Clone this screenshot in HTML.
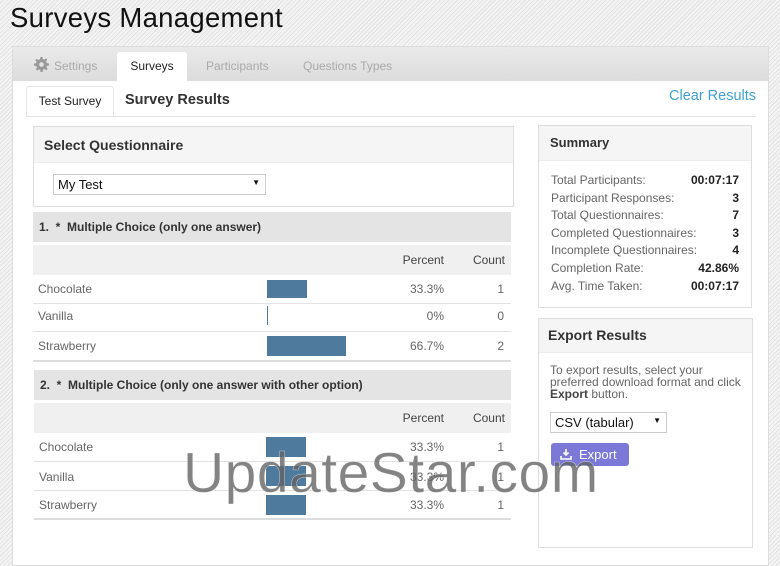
<!DOCTYPE html>
<html><head><meta charset="utf-8"><style>
*{margin:0;padding:0;box-sizing:border-box}
body{width:780px;height:536px;overflow:hidden;position:relative;font-family:"Liberation Sans",Arial,sans-serif;
background:repeating-linear-gradient(135deg,#f4f4f4 0 2px,#e2e2e2 2px 3px);}
.a{position:absolute}
h1{position:absolute;left:10px;top:2px;font-weight:normal;font-size:27.5px;color:#111;letter-spacing:0.3px}
.panel{left:12px;top:46px;width:757px;height:520px;background:#fff;border:1px solid #ddd}
.tabbar{left:13px;top:47px;width:755px;height:34px;background:linear-gradient(#eaeaea,#dcdcdc)}
.tab{font-size:12px;color:#aaa}
.box{border:1px solid #ddd;background:#fff}
.bh{background:#f5f5f5;border-bottom:1px solid #eee;font-weight:bold;color:#333}
.qh{background:#e4e4e4;font-weight:bold;font-size:12px;color:#333;padding-left:6px}
.th{background:#f0f0f0;font-size:12px;color:#444}
.row{background:#fff;border-bottom:1px solid #e2e2e2;font-size:12px;color:#666}
.bar{background:#4e7a9e}
.s{font-size:12px;color:#666;line-height:17.6px}
.s b{float:right;color:#222}
</style></head><body>
<h1>Surveys Management</h1>
<div class="a panel"></div>
<div class="a tabbar"></div>
<svg class="a" style="left:34px;top:57px" width="15" height="15" viewBox="0 0 16 16"><path fill="#999" d="M7 0h2l.4 2.2 1.5.6 1.800-1.3 1.4 1.4-1.3 1.8.6 1.5L16 7v2l-2.2.4-.6 1.5 1.3 1.8-1.4 1.4-1.8-1.3-1.5.6L9 16H7l-.4-2.2-1.5-.6-1.8 1.3-1.4-1.4 1.3-1.8-.6-1.5L0 9V7l2.2-.4.6-1.5-1.3-1.8 1.4-1.4 1.8 1.3 1.5-.6z"/><circle cx="8" cy="8" r="2.5" fill="#e2e2e2"/></svg>
<div class="a tab" style="left:54px;top:59px">Settings</div>
<div class="a" style="left:117px;top:52px;width:70px;height:30px;background:#fff;border-radius:3px 3px 0 0;font-size:12px;color:#222;text-align:center;line-height:28px">Surveys</div>
<div class="a tab" style="left:206px;top:59px">Participants</div>
<div class="a tab" style="left:303px;top:59px">Questions Types</div>
<div class="a" style="left:26px;top:86px;width:88px;height:31px;background:#fff;border:1px solid #e4e4e4;border-bottom:none;border-radius:3px 3px 0 0;font-size:12px;color:#222;text-align:center;line-height:29px">Test Survey</div>
<div class="a" style="left:26px;top:116px;width:730px;height:1px;background:#e4e4e4"></div>
<div class="a" style="left:125px;top:92px;font-size:14.5px;font-weight:bold;color:#333">Survey Results</div>
<div class="a" style="left:669px;top:88px;font-size:14.5px;color:#3fa1cf">Clear Results</div>

<div class="a box" style="left:33px;top:126px;width:481px;height:81px"></div>
<div class="a bh" style="left:34px;top:127px;width:479px;height:36px;font-size:14px;padding:10px 0 0 10px">Select Questionnaire</div>
<div class="a" style="left:53px;top:174px;width:213px;height:21px;border:1px solid #ccc;background:#fff;font-size:13px;padding:2px 4px;color:#111">My Test<span style="position:absolute;right:5px;top:3px;font-size:8px">&#9660;</span></div>

<div class="a qh" style="left:33px;top:212px;width:478px;height:30px;line-height:30px">1. &nbsp;* &nbsp;Multiple Choice (only one answer)</div>
<div class="a th" style="left:33px;top:245px;width:478px;height:30px"><span class="a" style="right:67px;top:8px">Percent</span><span class="a" style="right:6px;top:8px">Count</span></div>
<div class="a row" style="left:33px;top:275px;width:478px;height:29px"><span class="a" style="left:5px;top:7px">Chocolate</span><span class="a" style="right:67px;top:7px">33.3%</span><span class="a" style="right:7px;top:7px">1</span></div>
<div class="a row" style="left:33px;top:304px;width:478px;height:28px"><span class="a" style="left:5px;top:5px">Vanilla</span><span class="a" style="right:67px;top:5px">0%</span><span class="a" style="right:7px;top:5px">0</span></div>
<div class="a row" style="left:33px;top:332px;width:478px;height:30px;border-bottom:2px solid #ddd"><span class="a" style="left:5px;top:7px">Strawberry</span><span class="a" style="right:67px;top:7px">66.7%</span><span class="a" style="right:7px;top:7px">2</span></div>
<div class="a bar" style="left:267px;top:280px;width:40px;height:18px"></div>
<div class="a bar" style="left:267px;top:306px;width:1px;height:19px"></div>
<div class="a bar" style="left:267px;top:336px;width:79px;height:20px"></div>

<div class="a qh" style="left:34px;top:370px;width:477px;height:30px;line-height:30px">2. &nbsp;* &nbsp;Multiple Choice (only one answer with other option)</div>
<div class="a th" style="left:34px;top:403px;width:477px;height:30px"><span class="a" style="right:67px;top:8px">Percent</span><span class="a" style="right:6px;top:8px">Count</span></div>
<div class="a row" style="left:34px;top:433px;width:477px;height:29px"><span class="a" style="left:5px;top:7px">Chocolate</span><span class="a" style="right:67px;top:7px">33.3%</span><span class="a" style="right:7px;top:7px">1</span></div>
<div class="a row" style="left:34px;top:462px;width:477px;height:29px"><span class="a" style="left:5px;top:8px">Vanilla</span><span class="a" style="right:67px;top:8px">33.3%</span><span class="a" style="right:7px;top:8px">1</span></div>
<div class="a row" style="left:34px;top:491px;width:477px;height:29px;border-bottom:2px solid #ddd"><span class="a" style="left:5px;top:7px">Strawberry</span><span class="a" style="right:67px;top:7px">33.3%</span><span class="a" style="right:7px;top:7px">1</span></div>
<div class="a bar" style="left:266px;top:437px;width:40px;height:20px"></div>
<div class="a bar" style="left:266px;top:466px;width:40px;height:20px"></div>
<div class="a bar" style="left:266px;top:495px;width:40px;height:20px"></div>

<div class="a box" style="left:538px;top:125px;width:214px;height:183px"></div>
<div class="a bh" style="left:539px;top:126px;width:212px;height:35px;font-size:13px;padding:9px 0 0 11px">Summary</div>
<div class="a s" style="left:551px;top:172px;width:188px">
<div>Total Participants:<b>00:07:17</b></div>
<div>Participant Responses:<b>3</b></div>
<div>Total Questionnaires:<b>7</b></div>
<div>Completed Questionnaires:<b>3</b></div>
<div>Incomplete Questionnaires:<b>4</b></div>
<div>Completion Rate:<b>42.86%</b></div>
<div>Avg. Time Taken:<b>00:07:17</b></div>
</div>

<div class="a box" style="left:538px;top:318px;width:215px;height:230px"></div>
<div class="a bh" style="left:539px;top:319px;width:213px;height:34px;font-size:14px;padding:8px 0 0 9px">Export Results</div>
<div class="a" style="left:550px;top:364px;width:200px;font-size:12px;line-height:12px;color:#666">To export results, select your preferred download format and click <b style="color:#444">Export</b> button.</div>
<div class="a" style="left:550px;top:412px;width:117px;height:21px;border:1px solid #ccc;background:#fff;font-size:13px;padding:2px 4px;color:#111">CSV (tabular)<span style="position:absolute;right:5px;top:3px;font-size:8px">&#9660;</span></div>
<div class="a" style="left:551px;top:443px;width:78px;height:23px;background:#7b78d8;border-radius:3px;color:#fff;font-size:13px;line-height:23px;padding-left:28px">Export</div>
<svg class="a" style="left:560px;top:448px" width="12" height="12" viewBox="0 0 12 12"><path d="M6 1v6M3.5 4.5L6 7l2.5-2.5M1 8v3h10V8" stroke="#fff" stroke-width="1.6" fill="none"/></svg>

<div class="a" style="left:183px;top:440px;font-size:57px;color:rgba(100,100,100,0.8);letter-spacing:0.5px;-webkit-text-stroke:0.5px rgba(255,255,255,0.6)">UpdateStar.com</div>
</body></html>
